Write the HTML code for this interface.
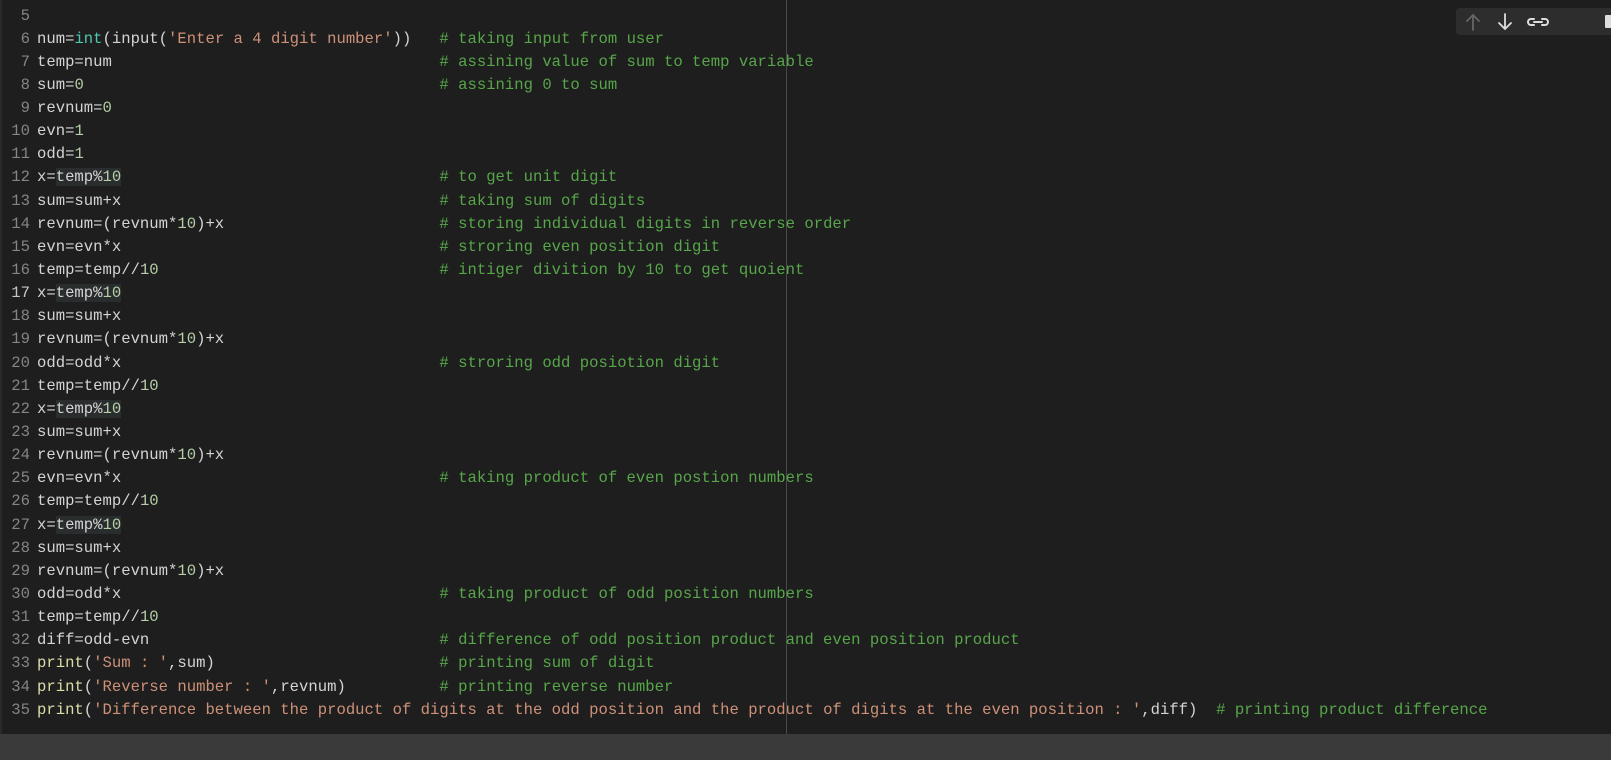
<!DOCTYPE html>
<html><head><style>
html,body{margin:0;padding:0;width:1611px;height:760px;overflow:hidden;background:#1e1e1e;}
body{position:relative;font-family:"Liberation Mono",monospace;font-size:15.6px;}
.l{position:absolute;left:0;height:23.14px;line-height:23.14px;white-space:pre;}
.n{position:absolute;left:0;width:30px;text-align:right;color:#858585;}
.c{position:absolute;left:37px;color:#d4d4d4;}
.s{color:#ce9178}.m{color:#b5cea8}.k{color:#4ec9b0}.f{color:#dcdcaa}.g{color:#57a64a}
.h{background:#2a2d2e}
#vl{position:absolute;left:786px;top:0;width:1px;height:735px;background:#4a4a4a}
#lb{position:absolute;left:0;top:0;width:2px;height:735px;background:#2a2a2a}
#bb{position:absolute;left:0;top:734px;width:1611px;height:26px;background:#3a3a3a}
#tb{position:absolute;left:1456px;top:8px;width:170px;height:27px;background:#2d2d2d;border-radius:4px}
</style></head><body>
<div id="lb"></div><div id="vl"></div>
<div id="code"></div>
<div id="tb">
<svg width="170" height="27" style="position:absolute;left:0;top:0">
<g fill="none" stroke-width="1.8" stroke-linecap="round">
<path d="M17 22V7M11 13l6-6 6 6" stroke="#666"/>
<path d="M49 6v15M43 15l6 6 6-6" stroke="#ddd"/>
<path d="M78 11h-3a3 3 0 0 0 0 6h3M86 11h3a3 3 0 0 1 0 6h-3M78 14h8" stroke="#ddd" stroke-width="2"/>
</g>
<rect x="149" y="7" width="8" height="13" rx="1" fill="#ddd"/>
</svg>
</div>
<div id="bb"></div>
<script>
var L=[
[5,''],
[6,'num=<span class="k">int</span>(input(<span class="s">\'Enter a 4 digit number\'</span>))   <span class="g"># taking input from user</span>'],
[7,'temp=num                                   <span class="g"># assining value of sum to temp variable</span>'],
[8,'sum=<span class="m">0</span>                                      <span class="g"># assining 0 to sum</span>'],
[9,'revnum=<span class="m">0</span>'],
[10,'evn=<span class="m">1</span>'],
[11,'odd=<span class="m">1</span>'],
[12,'x=<span class="h">temp%<span class="m">10</span></span>                                  <span class="g"># to get unit digit</span>'],
[13,'sum=sum+x                                  <span class="g"># taking sum of digits</span>'],
[14,'revnum=(revnum*<span class="m">10</span>)+x                       <span class="g"># storing individual digits in reverse order</span>'],
[15,'evn=evn*x                                  <span class="g"># stroring even position digit</span>'],
[16,'temp=temp//<span class="m">10</span>                              <span class="g"># intiger divition by 10 to get quoient</span>'],
[17,'x=<span class="h">temp%<span class="m">10</span></span>'],
[18,'sum=sum+x'],
[19,'revnum=(revnum*<span class="m">10</span>)+x'],
[20,'odd=odd*x                                  <span class="g"># stroring odd posiotion digit</span>'],
[21,'temp=temp//<span class="m">10</span>'],
[22,'x=<span class="h">temp%<span class="m">10</span></span>'],
[23,'sum=sum+x'],
[24,'revnum=(revnum*<span class="m">10</span>)+x'],
[25,'evn=evn*x                                  <span class="g"># taking product of even postion numbers</span>'],
[26,'temp=temp//<span class="m">10</span>'],
[27,'x=<span class="h">temp%<span class="m">10</span></span>'],
[28,'sum=sum+x'],
[29,'revnum=(revnum*<span class="m">10</span>)+x'],
[30,'odd=odd*x                                  <span class="g"># taking product of odd position numbers</span>'],
[31,'temp=temp//<span class="m">10</span>'],
[32,'diff=odd-evn                               <span class="g"># difference of odd position product and even position product</span>'],
[33,'<span class="f">print</span>(<span class="s">\'Sum : \'</span>,sum)                        <span class="g"># printing sum of digit</span>'],
[34,'<span class="f">print</span>(<span class="s">\'Reverse number : \'</span>,revnum)          <span class="g"># printing reverse number</span>'],
[35,'<span class="f">print</span>(<span class="s">\'Difference between the product of digits at the odd position and the product of digits at the even position : \'</span>,diff)  <span class="g"># printing product difference</span>']
];
var h='';
L.forEach(function(a,i){var t=4.5+i*23.14;
h+='<div class="l" style="top:'+t+'px;width:1611px"><span class="n"'+(a[0]==17?' style="color:#c6c6c6"':'')+'>'+a[0]+'</span><span class="c">'+a[1]+'</span></div>';});
document.getElementById('code').innerHTML=h;
</script>
</body></html>
